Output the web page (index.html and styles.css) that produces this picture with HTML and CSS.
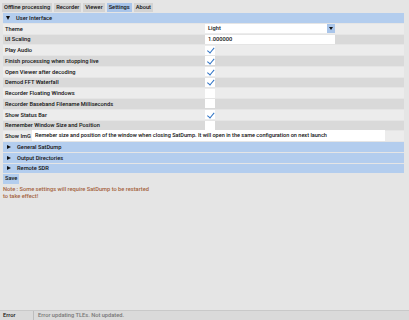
FILE: index.html
```
<!DOCTYPE html>
<html lang="en">
<head>
    <meta charset="UTF-8">
    <meta name="viewport" content="width=device-width, initial-scale=1.0">
    <title>SatDump</title>
    <link rel="stylesheet" href="styles.css">
</head>
<body>
    <div class="app">
        <div class="tabs">
            <span class="tab">Offline processing</span>
            <span class="tab">Recorder</span>
            <span class="tab">Viewer</span>
            <span class="tab tab-active">Settings</span>
            <span class="tab">About</span>
        </div>

        <div class="settings">
            <div class="header"><span class="arrow-down"></span>User Interface</div>

            <div class="row light">
                <span class="label">Theme</span>
                <div class="combo">
                    <span class="combo-text">Light</span>
                    <span class="combo-btn"><span class="arrow-small"></span></span>
                </div>
            </div>
            <div class="row dark">
                <span class="label">UI Scaling</span>
                <div class="input">1.000000</div>
            </div>
            <div class="row light">
                <span class="label">Play Audio</span>
                <span class="check on"></span>
            </div>
            <div class="row dark">
                <span class="label">Finish processing when stopping live</span>
                <span class="check on"></span>
            </div>
            <div class="row light">
                <span class="label">Open Viewer after decoding</span>
                <span class="check on"></span>
            </div>
            <div class="row dark">
                <span class="label">Demod FFT Waterfall</span>
                <span class="check on"></span>
            </div>
            <div class="row light">
                <span class="label">Recorder Floating Windows</span>
                <span class="check"></span>
            </div>
            <div class="row dark">
                <span class="label">Recorder Baseband Filename Milliseconds</span>
                <span class="check"></span>
            </div>
            <div class="row light">
                <span class="label">Show Status Bar</span>
                <span class="check on"></span>
            </div>
            <div class="row dark">
                <span class="label">Remember Window Size and Position</span>
                <span class="check"></span>
            </div>
            <div class="row light tip-row">
                <span class="label">Show ImG</span>
                <span class="check"></span>
                <div class="tooltip">Remeber size and position of the window when closing SatDump. It will open in the same configuration on next launch</div>
            </div>

            <div class="header"><span class="arrow-right"></span>General SatDump</div>
            <div class="header"><span class="arrow-right"></span>Output Directories</div>
            <div class="header"><span class="arrow-right"></span>Remote SDR</div>

            <div class="save">Save</div>
            <p class="note">Note : Some settings will require SatDump to be restarted<br>to take effect!</p>
        </div>
    </div>

    <div class="statusbar">
        <span class="status-label">Error</span>
        <span class="status-text">Error updating TLEs. Not updated.</span>
    </div>
</body>
</html>
```

FILE: styles.css
```
body{
    margin: 0;
    padding: 0;
    width: 409px;
    height: 320px;
    overflow: hidden;
    background-color: #e5e5e5;
    font-family: Roboto, "Liberation Sans", Arial, sans-serif;
    font-weight: 500;
    font-size: 5.7px;
    color: #111;
    display: flex;
    flex-direction: column;
}

.app{
    flex: 1;
    padding: 3px 5px 0 3px;
}

.tabs{
    display: flex;
    gap: 2px;
    height: 9px;
    margin-left: -1px;
}

.tab{
    background-color: #d3d3d3;
    padding: 0 2px;
    line-height: 9px;
}

.tab-active{
    background-color: #a9c5ea;
}

.settings{
    margin-top: 1px;
}

.header{
    display: flex;
    align-items: center;
    height: 9.75px;
    margin-bottom: 1px;
    background-color: #b3cdee;
}

.arrow-down{
    width: 0;
    height: 0;
    margin: 0 6px 0 3px;
    border-left: 2.5px solid transparent;
    border-right: 2.5px solid transparent;
    border-top: 4px solid #111;
}

.arrow-right{
    width: 0;
    height: 0;
    margin: 0 6px 0 4px;
    border-top: 2.5px solid transparent;
    border-bottom: 2.5px solid transparent;
    border-left: 4px solid #111;
}

.row{
    position: relative;
    display: grid;
    grid-template-columns: 202px 1fr;
    align-items: center;
    height: 9.75px;
    margin-bottom: 1px;
}

.light{
    background-color: #ececec;
}

.dark{
    background-color: #d9d9d9;
}

.label{
    padding-left: 2px;
    white-space: nowrap;
    overflow: hidden;
}

.combo{
    display: flex;
    width: 130px;
    height: 9px;
    background-color: #fff;
}

.combo-text{
    flex: 1;
    padding-left: 3px;
    line-height: 9px;
}

.combo-btn{
    width: 8px;
    display: flex;
    align-items: center;
    justify-content: center;
    background-color: #a9c5ea;
}

.arrow-small{
    width: 0;
    height: 0;
    border-left: 2px solid transparent;
    border-right: 2px solid transparent;
    border-top: 3.5px solid #111;
}

.input{
    width: 127px;
    height: 9px;
    padding-left: 3px;
    line-height: 9px;
    background-color: #fff;
}

.check{
    position: relative;
    width: 10px;
    height: 9px;
    background-color: #fff;
}

.check.on::after{
    content: "";
    position: absolute;
    left: 3.5px;
    top: 0.5px;
    width: 2.5px;
    height: 5.5px;
    border-right: 1.5px solid #2d72c4;
    border-bottom: 1.5px solid #2d72c4;
    transform: rotate(40deg);
}

.tooltip{
    position: absolute;
    left: 29px;
    top: -1px;
    width: 350px;
    height: 11px;
    padding-left: 3px;
    line-height: 11px;
    background-color: #fff;
    font-size: 5.55px;
    white-space: nowrap;
}

.save{
    display: inline-block;
    padding: 0 2px;
    line-height: 9.75px;
    background-color: #b3cdee;
}

.note{
    margin: 2px 0 0;
    color: #a4623b;
    line-height: 6.5px;
}

.statusbar{
    display: flex;
    height: 9px;
    border-top: 1px solid #c9c9c9;
    background-color: #dadada;
    line-height: 9px;
}

.status-label{
    width: 30px;
    padding-left: 3px;
    border-right: 1px solid #bdbdbd;
}

.status-text{
    padding-left: 4px;
    color: #777;
}
```
